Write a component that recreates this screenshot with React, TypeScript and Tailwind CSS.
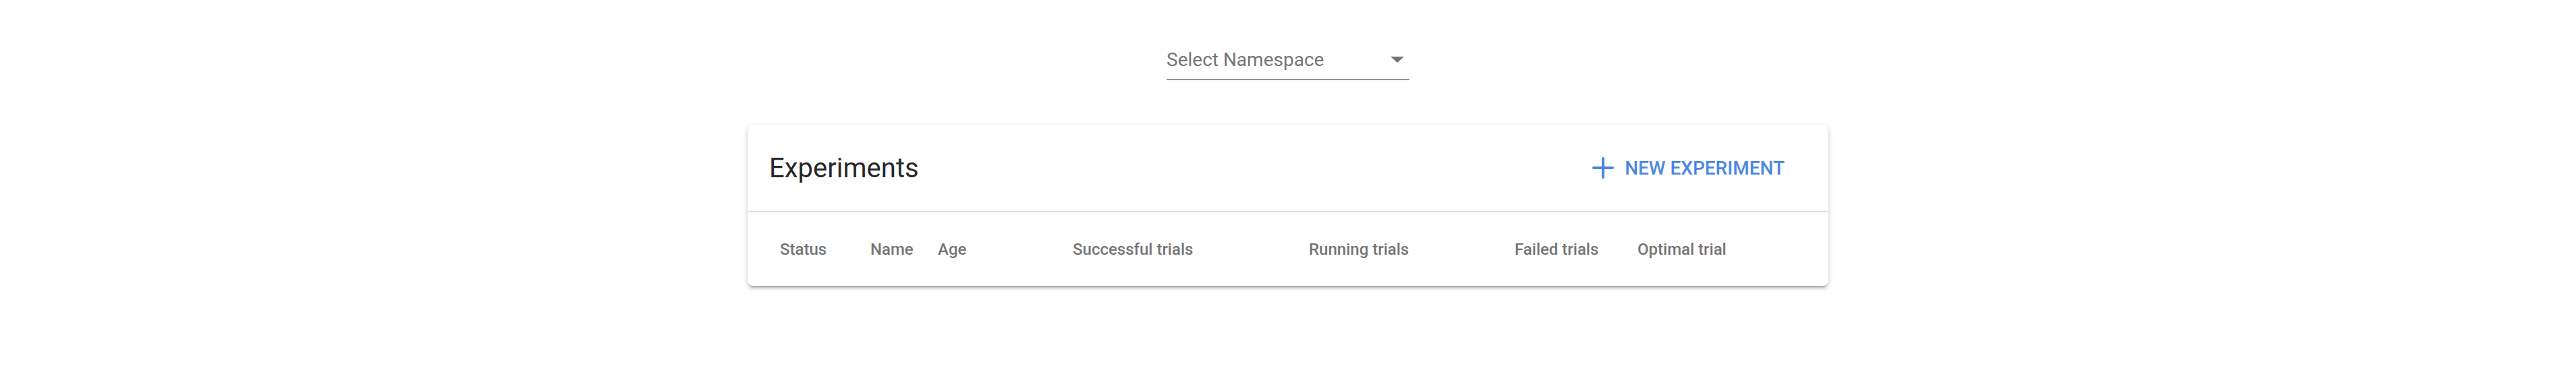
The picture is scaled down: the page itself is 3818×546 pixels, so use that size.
import { Plus } from 'lucide-react';

const columns = [
  { label: 'Status', width: 'w-[134px]' },
  { label: 'Name', width: 'w-[100px]' },
  { label: 'Age', width: 'w-[200px]' },
  { label: 'Successful trials', width: 'w-[350px]' },
  { label: 'Running trials', width: 'w-[305px]' },
  { label: 'Failed trials', width: 'w-[182px]' },
  { label: 'Optimal trial', width: 'w-[200px]' },
];

export default function App() {
  return (
    <div className="w-full h-[546px] bg-white font-['Roboto',sans-serif] flex flex-col items-center">
      {/* Namespace select */}
      <div className="mt-[72px] w-[360px] flex items-center justify-between pb-[12px] border-b-2 border-[#949494] cursor-pointer">
        <span className="text-[28px] leading-[33px] text-[#757575]">Select Namespace</span>
        <svg width="20" height="10" viewBox="0 0 20 10" className="mr-[8px]">
          <path d="M0 0 L20 0 L10 9 Z" fill="#757575" />
        </svg>
      </div>

      {/* Experiments card */}
      <div className="mt-[66px] w-[1602px] bg-white rounded-[8px] shadow-[0_6px_2px_-4px_rgba(0,0,0,0.2),0_4px_4px_0_rgba(0,0,0,0.14),0_2px_10px_0_rgba(0,0,0,0.12)]">
        <div className="h-[130px] flex items-center justify-between pl-[32px] pr-[49px] border-b-2 border-[#e0e0e0]">
          <h1 className="text-[40px] leading-[47px] text-[rgba(0,0,0,0.87)]">Experiments</h1>
          <button className="flex items-center gap-[8px] px-[16px] h-[72px] rounded-[8px] text-[#4a88e0]">
            <Plus size={48} strokeWidth={2} />
            <span className="text-[28px] leading-[33px] font-medium">NEW EXPERIMENT</span>
          </button>
        </div>
        <div className="h-[109px] flex items-center pl-[48px]">
          {columns.map((c) => (
            <div key={c.label} className={`${c.width} shrink-0 text-[24px] leading-[28px] font-medium text-[#757575]`}>
              {c.label}
            </div>
          ))}
        </div>
      </div>
    </div>
  );
}
